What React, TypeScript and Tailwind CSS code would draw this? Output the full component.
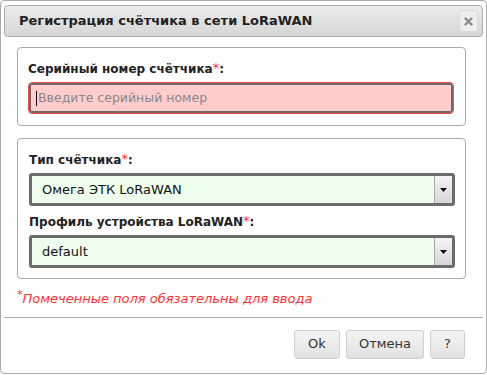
import React from "react";

function Req() {
  return <sup className="relative top-[-1px] text-[13px] font-normal text-[#ff3333]">*</sup>;
}

function Select({ value }: { value: string }) {
  return (
    <div className="relative flex h-[33px] items-center rounded-[3px] border-[3px] border-[#6b6b6b] bg-[#eeffee] pl-[10px] text-[13px] text-[#111]">
      {value}
      <div className="absolute right-0 top-0 flex h-full w-[18px] items-center justify-center border-l border-[#aaa] bg-gradient-to-b from-[#f5f5f5] to-[#d6d6d6]">
        <svg width="7" height="4" viewBox="0 0 7 4">
          <path d="M0 0h7L3.5 4z" fill="#111" />
        </svg>
      </div>
    </div>
  );
}

function Btn({ children, w }: { children: React.ReactNode; w: string }) {
  return (
    <button
      className={`flex h-[29px] ${w} items-center justify-center rounded-[3px] border border-[#cfcfcf] bg-gradient-to-b from-[#f4f4f4] to-[#e2e2e2] text-[13px] text-[#333]`}
    >
      {children}
    </button>
  );
}

export default function App() {
  return (
    <div
      className="h-[375px] w-[487px] bg-white"
      style={{ fontFamily: '"DejaVu Sans", Verdana, sans-serif' }}
    >
      <div className="flex h-[374px] flex-col rounded-[4px] border border-[#aaa] bg-white px-[3px] pt-[4px]">
        {/* Title bar */}
        <div className="flex h-[32px] items-center justify-between rounded-[4px] border border-[#aaa] bg-gradient-to-b from-[#ececec] to-[#d6d6d6] pl-[14px] pr-[4px]">
          <span className="text-[13px] font-bold text-[#222]">
            Регистрация счётчика в сети LoRaWAN
          </span>
          <div className="flex h-[22px] w-[19px] items-center justify-center rounded-[3px] border border-[#d8d8d8] bg-[#eeeeee]">
            <svg width="9" height="9" viewBox="0 0 9 9">
              <path d="M1.5 1.5l6 6M7.5 1.5l-6 6" stroke="#888" strokeWidth="2.4" strokeLinecap="round" />
            </svg>
          </div>
        </div>

        {/* Body */}
        <div className="pl-[13px] pr-[17px] pt-[10px]">
          <div className="rounded-[4px] border border-[#aaa] pb-[11px] pl-[10px] pr-[11px] pt-[13px]">
            <div className="mb-[5px] text-[12px] font-bold leading-[16px] text-[#222]">
              Серийный номер счётчика<Req />:
            </div>
            <div className="rounded-[4px] border border-[#ff4444]">
              <div className="flex h-[30px] items-center rounded-[3px] border-2 border-[#6b6b6b] bg-[#ffcccc] pl-[5px] text-[12.5px] text-[#888]">
                <span className="mr-[1px] h-[15px] w-px bg-[#111]" />
                Введите серийный номер
              </div>
            </div>
          </div>

          <div className="mt-[12px] rounded-[4px] border border-[#aaa] pb-[10px] pl-[11px] pr-[10px] pt-[13px]">
            <div className="mb-[5px] text-[12px] font-bold leading-[16px] text-[#222]">
              Тип счётчика<Req />:
            </div>
            <Select value="Омега ЭТК LoRaWAN" />
            <div className="mb-[5px] mt-[8px] text-[12px] font-bold leading-[16px] text-[#222]">
              Профиль устройства LoRaWAN<Req />:
            </div>
            <Select value="default" />
          </div>

          <div className="mt-[10px] text-[13px] italic text-[#ff3333]">
            <sup className="text-[11px]">*</sup>Помеченные поля обязательны для ввода
          </div>
        </div>

        <div className="mt-[8px] border-t border-[#aaa]" />

        <div className="flex justify-end gap-[6px] pr-[18px] pt-[12px]">
          <Btn w="w-[46px]">Ok</Btn>
          <Btn w="w-[78px]">Отмена</Btn>
          <Btn w="w-[35px]">?</Btn>
        </div>
      </div>
    </div>
  );
}
